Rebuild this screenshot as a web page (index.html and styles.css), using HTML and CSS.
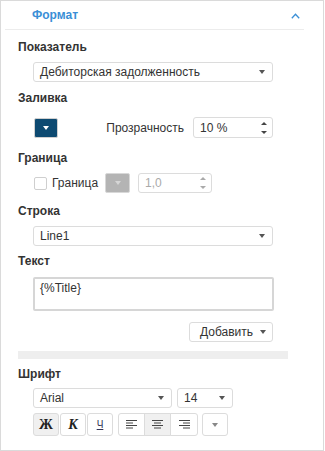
FILE: index.html
```html
<!DOCTYPE html>
<html lang="ru">
<head>
  <meta charset="UTF-8">
  <title>Формат</title>
  <link rel="stylesheet" href="styles.css">
</head>
<body>
  <div class="panel">
    <div class="panel-head">
      <span class="panel-title">Формат</span>
      <svg class="chevron" width="9" height="6" viewBox="0 0 9 6">
        <path d="M0.8 5.2 L4.5 1.3 L8.2 5.2" fill="none" stroke="#3a8fd6" stroke-width="1.3"/>
      </svg>
    </div>

    <div class="panel-body">
      <div class="label first">Показатель</div>
      <div class="select wide gap-7">
        <span>Дебиторская задолженность</span>
        <i class="caret"></i>
      </div>

      <div class="label gap-8">Заливка</div>
      <div class="row fill-row">
        <div class="color-btn"><i class="caret white"></i></div>
        <span class="opacity-label">Прозрачность</span>
        <div class="spin opacity-spin">
          <span>10 %</span>
          <span class="spin-arrows"><i class="up"></i><i class="down"></i></span>
        </div>
      </div>

      <div class="label gap-12">Граница</div>
      <div class="row border-row">
        <span class="check"></span>
        <span class="check-label">Граница</span>
        <div class="color-btn disabled"><i class="caret light"></i></div>
        <div class="spin width-spin disabled">
          <span>1,0</span>
          <span class="spin-arrows"><i class="up"></i><i class="down"></i></span>
        </div>
      </div>

      <div class="label gap-10">Строка</div>
      <div class="select wide gap-7">
        <span>Line1</span>
        <i class="caret"></i>
      </div>

      <div class="label gap-7">Текст</div>
      <div class="text-box">{%Title}</div>

      <div class="add-row">
        <div class="btn add-btn"><span>Добавить</span><i class="caret"></i></div>
      </div>

      <div class="divider"></div>

      <div class="label gap-7">Шрифт</div>
      <div class="row font-row">
        <div class="select font-family"><span>Arial</span><i class="caret"></i></div>
        <div class="select font-size"><span>14</span><i class="caret"></i></div>
      </div>

      <div class="row tools">
        <div class="tool active bold">Ж</div>
        <div class="tool italic">К</div>
        <div class="tool under">Ч</div>
        <div class="tool-group">
          <div class="tool">
            <svg width="11" height="11" viewBox="0 0 11 11"><path d="M0 1.5h11M0 4h7M0 6.5h11M0 9h7" stroke="#444" stroke-width="1"/></svg>
          </div>
          <div class="tool active">
            <svg width="11" height="11" viewBox="0 0 11 11"><path d="M0 1.5h11M2 4h7M0 6.5h11M2 9h7" stroke="#444" stroke-width="1"/></svg>
          </div>
          <div class="tool">
            <svg width="11" height="11" viewBox="0 0 11 11"><path d="M0 1.5h11M4 4h7M0 6.5h11M4 9h7" stroke="#444" stroke-width="1"/></svg>
          </div>
        </div>
        <div class="tool more"><i class="caret grey"></i></div>
      </div>
    </div>
  </div>
</body>
</html>
```

FILE: styles.css
```css
body {
  margin: 0;
  font-family: "Liberation Sans", Arial, sans-serif;
  font-size: 12px;
  color: #333;
  background: #fff;
}

.panel {
  box-sizing: border-box;
  width: 324px;
  height: 451px;
  border: 1px solid #dadada;
  background: #fff;
}

.panel-head {
  height: 28px;
  margin: 0 19px 0 4px;
  padding: 0 4px 0 27px;
  border-bottom: 1px solid #ececec;
  display: flex;
  align-items: center;
  justify-content: space-between;
}

.panel-title {
  font-weight: bold;
  color: #3a8fd6;
}

.chevron {
  margin-top: 1px;
}

.panel-body {
  padding-left: 17px;
}

.label {
  font-weight: bold;
  line-height: 16px;
}

.label.first { margin-top: 9px; }
.gap-7 { margin-top: 7px; }
.gap-8 { margin-top: 8px; }
.gap-10 { margin-top: 10px; }
.gap-12 { margin-top: 12px; }

.row {
  display: flex;
  align-items: center;
  margin-left: 15px;
}

/* selects and inputs */
.select, .spin, .btn {
  box-sizing: border-box;
  height: 20px;
  border: 1px solid #dcdcdc;
  border-radius: 3px;
  background: #fff;
  display: flex;
  align-items: center;
  justify-content: space-between;
  padding: 0 7px 0 6px;
}

.select.wide {
  width: 240px;
  margin-left: 15px;
}

.caret {
  display: block;
  width: 0;
  height: 0;
  border-top: 4px solid #555;
  border-left: 3.5px solid transparent;
  border-right: 3.5px solid transparent;
}

.caret.white { border-top-color: #fff; }
.caret.light { border-top-color: #d6d6d6; }
.caret.grey { border-top-color: #888; }

/* fill */
.fill-row {
  height: 21px;
  margin-top: 11px;
  width: 240px;
}

.color-btn {
  box-sizing: border-box;
  width: 24px;
  height: 20px;
  border: 1px solid #d0d0d0;
  border-radius: 2px;
  background: #0d4a71;
  display: flex;
  align-items: center;
  justify-content: center;
  margin-left: 1px;
}

.color-btn.disabled {
  width: 25px;
  background: #b4b4b4;
  border-color: #d8d8d8;
  margin-left: 7px;
}

.opacity-label {
  margin-left: auto;
  margin-right: 9px;
}

.spin {
  padding-right: 5px;
}

.opacity-spin {
  width: 80px;
  height: 21px;
}

.spin-arrows {
  display: flex;
  flex-direction: column;
  gap: 6px;
}

.spin-arrows i {
  display: block;
  width: 0;
  height: 0;
  border-left: 3.5px solid transparent;
  border-right: 3.5px solid transparent;
}

.spin-arrows .up { border-bottom: 3px solid #444; }
.spin-arrows .down { border-top: 3px solid #444; }

.spin.disabled { color: #aaa; }
.spin.disabled .up { border-bottom-color: #aaa; }
.spin.disabled .down { border-top-color: #aaa; }

/* border */
.border-row {
  margin-top: 7px;
  height: 20px;
}

.check {
  box-sizing: border-box;
  width: 13px;
  height: 13px;
  border: 1px solid #cfcfcf;
  border-radius: 2px;
  margin-left: 1px;
}

.check-label {
  margin-left: 5px;
}

.width-spin {
  width: 74px;
  margin-left: 8px;
}

/* text */
.text-box {
  box-sizing: border-box;
  width: 241px;
  height: 34px;
  margin: 8px 0 0 15px;
  border: 2px solid #d6d6d6;
  border-radius: 2px;
  padding: 2px 5px;
  line-height: 14px;
}

.add-row {
  width: 240px;
  margin: 11px 0 0 15px;
  display: flex;
  justify-content: flex-end;
}

.add-btn {
  padding: 0 6px 0 10px;
  gap: 7px;
}

.divider {
  width: 270px;
  height: 8px;
  margin-top: 9px;
  background: #eeeeee;
}

/* font */
.font-row {
  margin-top: 6px;
}

.font-family {
  width: 139px;
}

.font-size {
  width: 56px;
  margin-left: 5px;
}

.tools {
  margin-top: 5px;
  gap: 1px;
}

.tool {
  box-sizing: border-box;
  width: 26px;
  height: 23px;
  border: 1px solid #dcdcdc;
  border-radius: 3px;
  background: #fff;
  display: flex;
  align-items: center;
  justify-content: center;
}

.tool.active {
  background: #f0f0f0;
}

.tool.bold {
  font-family: "Liberation Serif", serif;
  font-weight: bold;
  font-size: 14px;
  color: #222;
}

.tool.italic {
  font-family: "Liberation Serif", serif;
  font-weight: bold;
  font-style: italic;
  font-size: 14px;
  color: #222;
}

.tool.under {
  font-size: 10px;
  text-decoration: underline;
  color: #335;
}

.tool-group {
  display: flex;
  margin-left: 4px;
}

.tool-group .tool {
  width: 27px;
  border-radius: 0;
  margin-left: -1px;
}

.tool-group .tool:first-child {
  border-radius: 3px 0 0 3px;
  margin-left: 0;
}

.tool-group .tool:last-child {
  width: 28px;
  border-radius: 0 3px 3px 0;
}

.tool.more {
  margin-left: 3px;
}
```
